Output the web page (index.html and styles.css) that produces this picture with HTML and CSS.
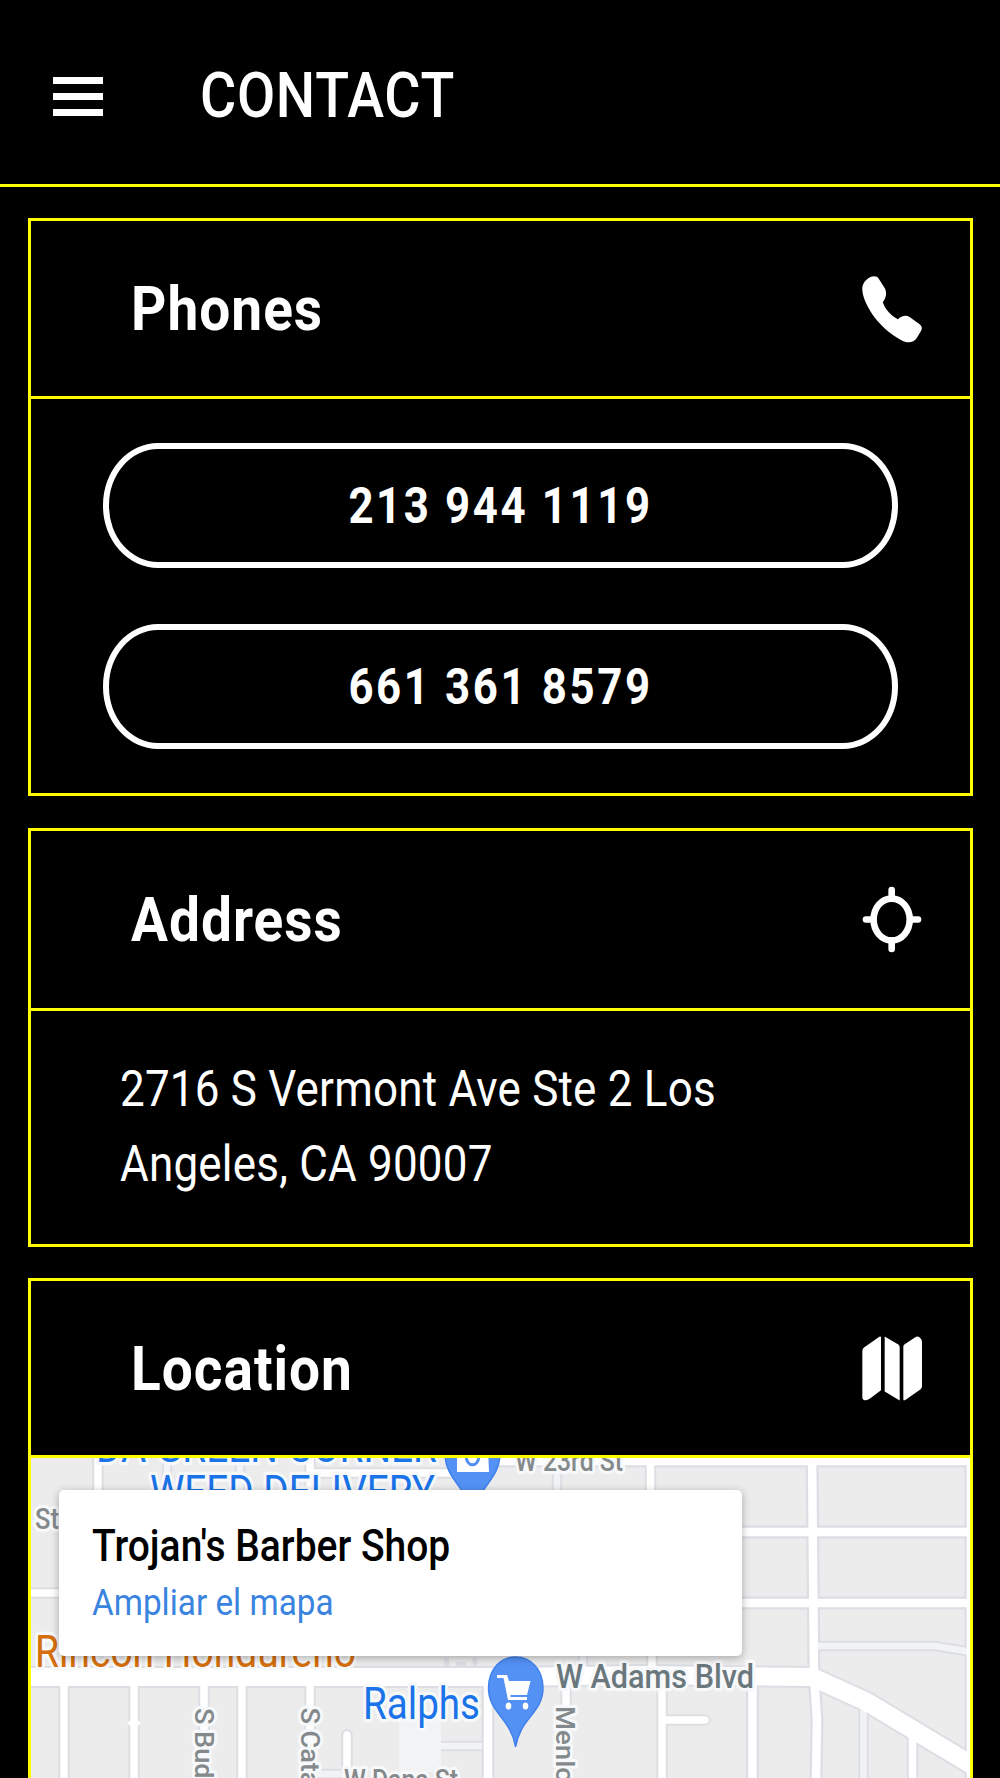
FILE: index.html
```html
<!DOCTYPE html>
<html lang="en">
<head>
  <meta charset="UTF-8">
  <meta name="viewport" content="width=device-width, initial-scale=1.0">
  <title>Contact</title>
  <link rel="stylesheet" href="styles.css">
</head>
<body>
  <header class="topbar">
    <button class="menu-btn" aria-label="Menu">
      <span></span>
      <span></span>
      <span></span>
    </button>
    <h1 class="tall">CONTACT</h1>
  </header>

  <main class="cards">
    <!-- Phones -->
    <section class="card phones-card">
      <div class="card-head">
        <h2 class="tall">Phones</h2>
        <svg class="icon" viewBox="1087 229 179 200">
          <path d="M1102 239C1113 229 1130 226 1137 237L1156 267C1162 282 1158 296 1149 307C1157 330 1174 347 1194 358C1205 348 1218 344 1230 352L1260 374C1266 380 1267 386 1263 393L1250 415C1240 429 1222 431 1202 419C1150 391 1105 339 1090 285C1086 266 1086 253 1102 239Z"/>
        </svg>
      </div>
      <div class="card-body phones">
        <a class="phone-btn" href="tel:2139441119"><span class="tall">213 944 1119</span></a>
        <a class="phone-btn" href="tel:6613618579"><span class="tall">661 361 8579</span></a>
      </div>
    </section>

    <!-- Address -->
    <section class="card">
      <div class="card-head address-head">
        <h2 class="tall">Address</h2>
        <svg class="icon" viewBox="1086 315 181 202">
          <path class="ring" d="M1175.500 353C1206 353 1230 381 1230 416S1206 479 1175.500 479S1121 451 1121 416S1145 353 1175.500 353Z"/>
          <path class="ring" d="M1175.500 327V350M1175.500 482V505M1098 416H1118M1233 416H1255"/>
        </svg>
      </div>
      <div class="card-body address">
        <p class="tall">2716 S Vermont Ave Ste 2 Los Angeles, CA 90007</p>
      </div>
    </section>

    <!-- Location -->
    <section class="card">
      <div class="card-head location-head">
        <h2 class="tall">Location</h2>
        <svg class="icon" viewBox="66 76 180 196">
          <path d="M67 122Q67 115 72 111L118 79Q123 76 123 81V239L90 264Q82 270 75 269Q67 268 67 260Z"/>
          <path d="M134 78L175 102Q179 105 179 110V270L134 243Z"/>
          <path d="M190 108Q190 104 194 101L226 80Q233 76 239 81Q246 86 246 94V228Q246 233 241 237L197 268Q190 272 190 266Z"/>
        </svg>
      </div>
      <div class="map">
        <svg class="map-canvas" viewBox="31 1458 939 320">
          <defs>
            <path id="lanes" d="M167 1450V1490M240 1450V1490M557 1460V1500M583 1650V1672M863.500 1700V1780M815 1646H935L972 1652M441 1746H482M310 1774H345"/>
            <path id="streets" d="M98 1450V1500M20 1593H60M310 1450V1500M310 1473H460M64 1680V1780M134 1680V1780M204 1680V1780M242 1680V1780M310 1680V1780M347 1735V1790M566 1680V1780M662 1680V1780M662 1720H705M650.500 1450V1500M652 1650V1675M912.500 1735V1780"/>
            <path id="avenues" d="M488 1680V1780M490 1461H975M740 1532H975M740 1603H975M812 1450L814 1675L817 1720L816 1780M752.500 1680V1780M971 1450V1780"/>
            <path id="boulevard" d="M20 1677H500L640 1675L812 1677L867 1702L980 1770"/>
          </defs>
          <!-- edges first, road surface on top -->
          <g class="edges">
            <use class="w-lane" href="#lanes"/>
            <use class="w-street" href="#streets"/>
            <use class="w-avenue" href="#avenues"/>
            <use class="w-boulevard" href="#boulevard"/>
          </g>
          <g class="surface">
            <use class="w-lane" href="#lanes"/>
            <use class="w-street" href="#streets"/>
            <use class="w-avenue" href="#avenues"/>
            <use class="w-boulevard" href="#boulevard"/>
          </g>
          <path fill="#fff" d="M127 1723L134 1717L141 1723L134 1729Z"/>
          <rect x="399" y="1717" width="42" height="55" fill="#f1f3f4"/>
          <path fill="#dcdee3" d="M443 1658h6v8h-4zM456 1662h10v4h-10zM472 1658h5v8h-4z"/>

          <g class="place">
            <text transform="translate(96 1462) scale(1 1.125)" textLength="341" lengthAdjust="spacingAndGlyphs">DA GREEN CORNER</text>
            <text transform="translate(150 1507) scale(1 1.125)" textLength="285" lengthAdjust="spacingAndGlyphs">WEED DELIVERY</text>
            <text transform="translate(363 1719) scale(1 1.125)" textLength="117" lengthAdjust="spacingAndGlyphs">Ralphs</text>
            <text class="food" transform="translate(35 1666.500) scale(1 1.125)" textLength="321" lengthAdjust="spacingAndGlyphs">Rincón Hondureño</text>
          </g>
          <g class="street">
            <text transform="translate(35 1528.500) scale(1 1.125)">St</text>
            <text transform="translate(515 1471) scale(1 1.125)" textLength="108" lengthAdjust="spacingAndGlyphs">W 23rd St</text>
            <text transform="translate(344 1790) scale(1 1.125)" textLength="114" lengthAdjust="spacingAndGlyphs">W Dana St</text>
            <text transform="translate(194.500 1708) scale(1.030 1.060) rotate(90)">S Budlong Ave</text>
            <text transform="translate(301 1707.500) scale(1.030 1.060) rotate(90)">S Catalina St</text>
            <text transform="translate(556 1706) scale(1.030 1.080) rotate(90)">Menlo Ave</text>
            <text class="avenue" transform="translate(556 1687.500) scale(1 1.125)" textLength="198" lengthAdjust="spacingAndGlyphs">W Adams Blvd</text>
          </g>

          <path class="pin" d="M472.500 1514C467 1488 445 1478 445 1454C445 1436 457 1424 472.500 1424S500 1436 500 1454C500 1478 478 1488 472.500 1514Z"/>
          <path fill="#fff" d="M457 1448H488L489 1472H457Z"/>
          <path fill="none" stroke="#5491f5" stroke-width="3" d="M466 1455C466 1468 479 1468 479 1455"/>

          <path class="pin" d="M515.600 1747C511 1718 488.500 1713 488.500 1688C488.500 1670 500 1657 515.600 1657S543 1670 543 1688C543 1713 520 1718 515.600 1747Z"/>
          <path fill="#fff" d="M497 1675H507L509 1681H530.500L527 1695H510.500V1697H527V1700H508L503.500 1678H497Z"/>
          <ellipse cx="508.500" cy="1706" rx="2.800" ry="3.500" fill="#fff"/>
          <ellipse cx="525.500" cy="1706" rx="2.800" ry="3.500" fill="#fff"/>
        </svg>
        <div class="place-card">
          <strong class="tall">Trojan's Barber Shop</strong>
          <a class="tall" href="#">Ampliar el mapa</a>
        </div>
      </div>
    </section>
  </main>
</body>
</html>
```
FILE: styles.css
```css
* {
  box-sizing: border-box;
}

html, body {
  margin: 0;
  height: 1778px;
  overflow: hidden;
  background: #000;
  color: #fff;
  font-family: Roboto, "Liberation Sans", sans-serif;
}

h1, h2, p {
  margin: 0;
}

/* narrow, tall lettering used all over the page */
.tall {
  transform: scaleY(1.125);
}

.topbar {
  display: flex;
  align-items: center;
  height: 187px;
  padding: 9px 53px 0;
  border-bottom: 3px solid #ff0;
}

.topbar h1 {
  margin-left: 97px;
  font-size: 55.5px;
  font-weight: 500;
  letter-spacing: 0.7px;
}

.menu-btn {
  display: flex;
  flex-direction: column;
  gap: 9px;
  width: 50px;
  padding: 0;
  border: 0;
  background: none;
}

.menu-btn span {
  width: 50px;
  height: 7px;
  background: #fff;
}

.cards {
  display: flex;
  flex-direction: column;
  gap: 31px;
  padding: 31px 27px 0 28px;
}

.card {
  border: 3px solid #ff0;
}

.phones-card {
  margin-bottom: 1px;
}

.card-head {
  display: flex;
  align-items: center;
  justify-content: space-between;
  height: 178px;
  padding: 1px 48px 0 100px;
  border-bottom: 3px solid #ff0;
}

.card-head h2 {
  font-size: 55px;
  font-weight: 700;
  letter-spacing: 1px;
}

.address-head {
  height: 180px;
  padding-top: 0;
}

.location-head {
  height: 177px;
}

.icon {
  width: 60px;
  height: 67px;
  fill: #fff;
}

.icon .ring {
  fill: none;
  stroke: #fff;
  stroke-width: 20;
  stroke-linecap: round;
}

.phones {
  display: flex;
  flex-direction: column;
  gap: 56px;
  height: 394px;
  padding: 44px 72px 0;
}

.phone-btn {
  display: flex;
  align-items: center;
  justify-content: center;
  height: 125px;
  border: 6px solid #fff;
  border-radius: 55px / 62px;
  color: #fff;
  font-size: 43.8px;
  font-weight: 700;
  letter-spacing: 2.6px;
  text-decoration: none;
}

.address {
  height: 233px;
  padding: 41px 180px 0 89px;
}

.address p {
  font-size: 44px;
  line-height: 67px;
  letter-spacing: 0.2px;
  transform-origin: top;
}

.map {
  position: relative;
  height: 400px;
  background: #ececec;
  overflow: hidden;
}

.map-canvas {
  display: block;
  width: 939px;
  height: 320px;
}

.edges, .surface {
  fill: none;
  stroke-linejoin: round;
}

.edges {
  stroke: #dcdee3;
}

.edges .w-lane { stroke-width: 10.5; }
.edges .w-street { stroke-width: 11.5; }
.edges .w-avenue { stroke-width: 13; }
.edges .w-boulevard { stroke-width: 22; }

.surface {
  stroke: #fff;
}

.surface .w-lane { stroke: #f1f3f4; stroke-width: 6.5; }
.surface .w-street { stroke-width: 7.5; }
.surface .w-avenue { stroke-width: 8.5; }
.surface .w-boulevard { stroke-width: 18; }

.w-street {
  stroke-linecap: round;
}

.place text, .street text {
  paint-order: stroke;
  stroke: #f7f8f9;
  stroke-width: 6px;
  stroke-linejoin: round;
}

.place text {
  fill: #1a73e8;
  font-size: 40px;
}

.place .food {
  fill: #d56e0c;
}

.street text {
  fill: #84898b;
  font-size: 25.5px;
  font-weight: 500;
}

.street .avenue {
  fill: #6a787d;
  font-size: 30px;
}

.pin {
  fill: #5491f5;
  stroke: #4081ec;
  stroke-width: 1.5;
}

.place-card {
  position: absolute;
  top: 32px;
  left: 28px;
  display: flex;
  flex-direction: column;
  align-items: flex-start;
  gap: 12px;
  width: 683px;
  height: 166px;
  padding: 33px;
  border-radius: 5px;
  background: #fff;
  box-shadow: 0 2px 8px rgba(0, 0, 0, 0.3);
}

.place-card strong {
  color: #000;
  font-size: 39px;
  font-weight: 500;
  line-height: 46px;
}

.place-card a {
  color: #3a84df;
  font-size: 33.3px;
  line-height: 43px;
  text-decoration: none;
}
```
